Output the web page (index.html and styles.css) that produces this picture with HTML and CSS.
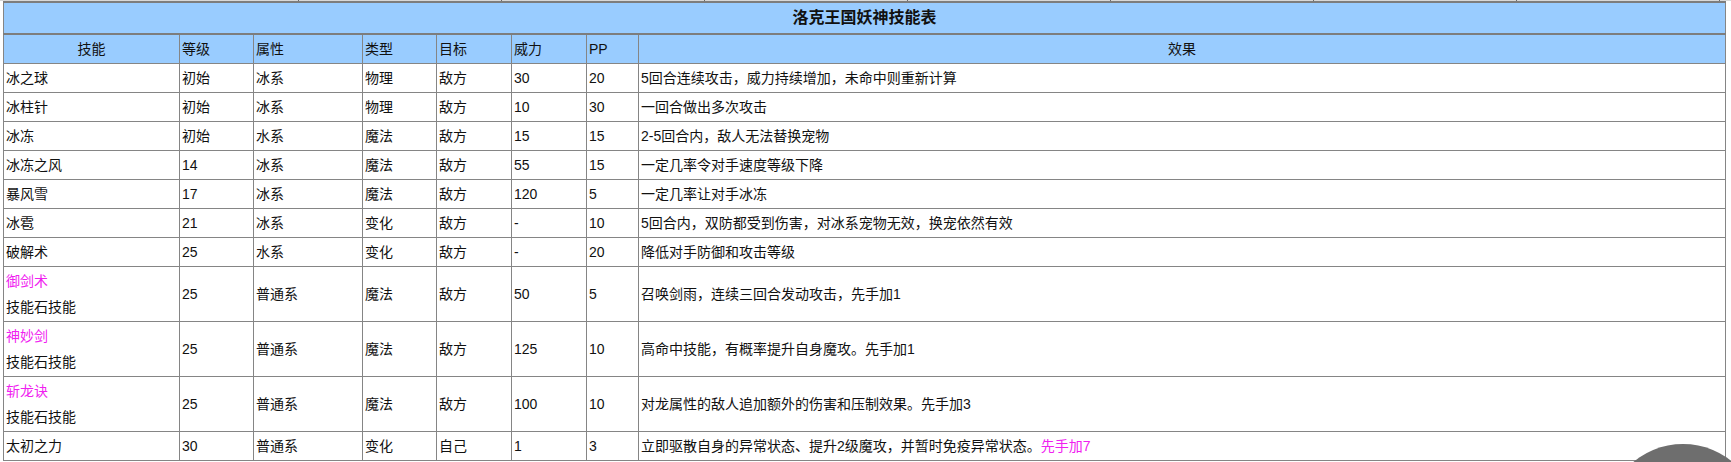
FILE: index.html
```html
<!DOCTYPE html>
<html lang="zh">
<head>
<meta charset="utf-8">
<title>洛克王国妖神技能表</title>
<link rel="stylesheet" href="styles.css">
</head>
<body>
<div class="prev-strip">
  <span class="seg seg-first"></span><span class="seg"></span><span class="seg"></span><span class="seg"></span><span class="seg"></span><span class="seg"></span><span class="seg"></span><span class="seg seg-last"></span>
</div>
<table class="skills">
  <colgroup>
    <col class="c-name"><col class="c-lv"><col class="c-attr"><col class="c-type"><col class="c-target"><col class="c-power"><col class="c-pp"><col class="c-effect">
  </colgroup>
  <thead>
    <tr class="title-row"><th colspan="8" class="title">洛克王国妖神技能表</th></tr>
    <tr class="head-row">
      <th class="center">技能</th><th>等级</th><th>属性</th><th>类型</th><th>目标</th><th>威力</th><th>PP</th><th class="center">效果</th>
    </tr>
  </thead>
  <tbody>
    <tr><td>冰之球</td><td>初始</td><td>冰系</td><td>物理</td><td>敌方</td><td>30</td><td>20</td><td>5回合连续攻击，威力持续增加，未命中则重新计算</td></tr>
    <tr><td>冰柱针</td><td>初始</td><td>冰系</td><td>物理</td><td>敌方</td><td>10</td><td>30</td><td>一回合做出多次攻击</td></tr>
    <tr><td>冰冻</td><td>初始</td><td>水系</td><td>魔法</td><td>敌方</td><td>15</td><td>15</td><td>2-5回合内，敌人无法替换宠物</td></tr>
    <tr><td>冰冻之风</td><td>14</td><td>冰系</td><td>魔法</td><td>敌方</td><td>55</td><td>15</td><td>一定几率令对手速度等级下降</td></tr>
    <tr><td>暴风雪</td><td>17</td><td>冰系</td><td>魔法</td><td>敌方</td><td>120</td><td>5</td><td>一定几率让对手冰冻</td></tr>
    <tr><td>冰雹</td><td>21</td><td>冰系</td><td>变化</td><td>敌方</td><td>-</td><td>10</td><td>5回合内，双防都受到伤害，对冰系宠物无效，换宠依然有效</td></tr>
    <tr><td>破解术</td><td>25</td><td>水系</td><td>变化</td><td>敌方</td><td>-</td><td>20</td><td>降低对手防御和攻击等级</td></tr>
    <tr><td><span class="pink">御剑术</span><br>技能石技能</td><td>25</td><td>普通系</td><td>魔法</td><td>敌方</td><td>50</td><td>5</td><td>召唤剑雨，连续三回合发动攻击，先手加1</td></tr>
    <tr><td><span class="pink">神妙剑</span><br>技能石技能</td><td>25</td><td>普通系</td><td>魔法</td><td>敌方</td><td>125</td><td>10</td><td>高命中技能，有概率提升自身魔攻。先手加1</td></tr>
    <tr><td><span class="pink">斩龙诀</span><br>技能石技能</td><td>25</td><td>普通系</td><td>魔法</td><td>敌方</td><td>100</td><td>10</td><td>对龙属性的敌人追加额外的伤害和压制效果。先手加3</td></tr>
    <tr><td>太初之力</td><td>30</td><td>普通系</td><td>变化</td><td>自己</td><td>1</td><td>3</td><td>立即驱散自身的异常状态、提升2级魔攻，并暂时免疫异常状态。<span class="pink">先手加7</span></td></tr>
  </tbody>
</table>
<div class="float-btn"></div>
</body>
</html>
```

FILE: styles.css
```css
html, body {
  margin: 0;
  padding: 0;
  background: #ffffff;
}

body {
  font-family: "Liberation Sans", "Noto Sans CJK SC", sans-serif;
  font-size: 14px;
  color: #111111;
  overflow: hidden;
}

.prev-strip {
  display: flex;
  height: 1px;
  padding-left: 96px;
  background: #d8d8d8;
}

.prev-strip .seg {
  width: 203px;
  height: 1px;
  border-right: 1px solid #6a6a6a;
  box-sizing: border-box;
  flex: none;
}

.skills {
  margin-left: 3px;
  width: 1723px;
  table-layout: fixed;
  border-collapse: collapse;
  border: 1px solid #858585;
}

.c-name { width: 176px; }
.c-lv { width: 74px; }
.c-attr { width: 109px; }
.c-type { width: 74px; }
.c-target { width: 75px; }
.c-power { width: 75px; }
.c-pp { width: 52px; }
.c-effect { width: auto; }

.skills th,
.skills td {
  border: 1px solid #858585;
  padding: 1px 2px;
  line-height: 26px;
  font-size: 14px;
  text-align: left;
  vertical-align: middle;
  white-space: nowrap;
}

.skills th {
  font-weight: normal;
  background: #99ccff;
}

.skills th.center {
  text-align: center;
}

.title-row .title {
  border-top: 2px solid #7d7d7d;
  border-bottom: 2px solid #7d7d7d;
  height: 30px;
  padding: 0;
  text-align: center;
  font-weight: bold;
  font-size: 16px;
  line-height: 30px;
  color: #111111;
}

.pink {
  color: #f020f0;
}

.float-btn {
  position: fixed;
  left: 1605px;
  top: 444px;
  width: 156px;
  height: 156px;
  border-radius: 50%;
  background: #6e6e6e;
}
```
